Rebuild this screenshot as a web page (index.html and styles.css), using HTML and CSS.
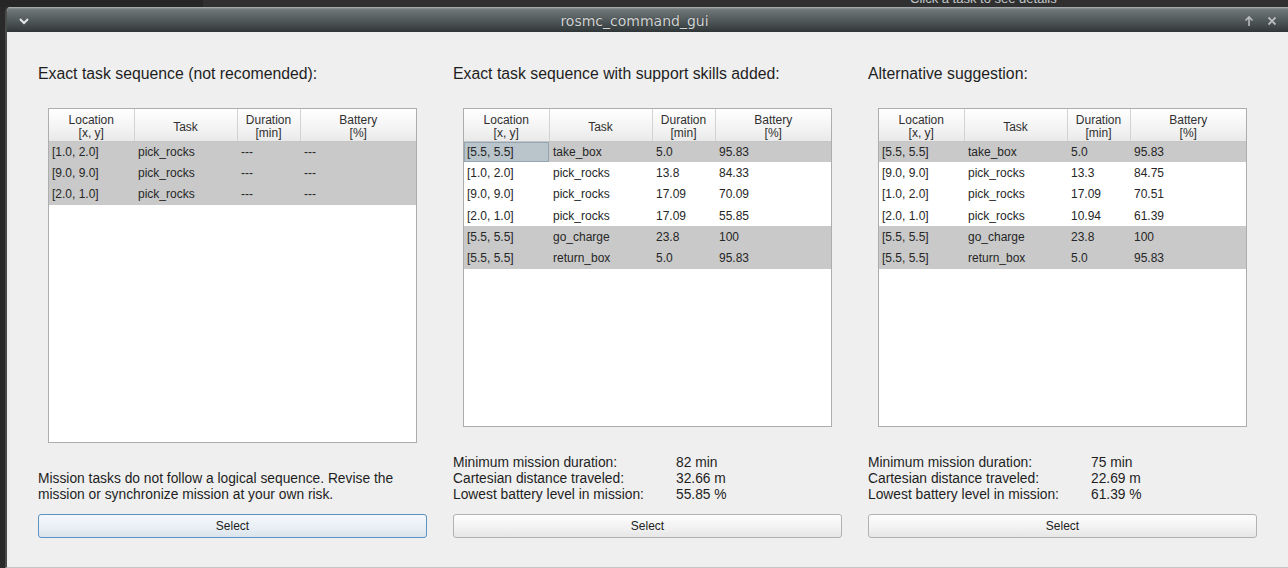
FILE: index.html
```html
<!DOCTYPE html>
<html lang="en">
<head>
<meta charset="utf-8">
<title>rosmc_command_gui</title>
<link rel="stylesheet" href="styles.css">
</head>
<body>
<div class="desk-strip"><span class="desk-hint">Click a task to see details</span></div>
<div class="window">
  <header class="titlebar">
    <svg class="tb-menu" width="12" height="8" viewBox="0 0 12 8"><polyline points="2,2 6,6 10,2" fill="none" stroke="#e6e6e6" stroke-width="2"/></svg>
    <span class="tb-title">rosmc_command_gui</span>
    <div class="tb-actions">
      <svg width="12" height="12" viewBox="0 0 12 12"><path d="M6 11V3M2.5 5.5L6 2l3.5 3.5" fill="none" stroke="#b9bcbd" stroke-width="1.6"/></svg>
      <svg width="12" height="12" viewBox="0 0 12 12"><path d="M2.5 2.5l7 7M9.5 2.5l-7 7" fill="none" stroke="#b9bcbd" stroke-width="1.8"/></svg>
    </div>
  </header>
  <main class="content">
    <section class="col">
      <h2 class="col-title">Exact task sequence (not recomended):</h2>
      <div class="grid-box">
        <table class="tasks">
          <colgroup><col class="c-loc"><col class="c-task"><col class="c-dur"><col></colgroup>
          <thead><tr><th>Location<br>[x, y]</th><th>Task</th><th>Duration<br>[min]</th><th>Battery<br>[%]</th></tr></thead>
          <tbody>
            <tr class="shade"><td>[1.0, 2.0]</td><td>pick_rocks</td><td>---</td><td>---</td></tr>
            <tr class="shade"><td>[9.0, 9.0]</td><td>pick_rocks</td><td>---</td><td>---</td></tr>
            <tr class="shade"><td>[2.0, 1.0]</td><td>pick_rocks</td><td>---</td><td>---</td></tr>
          </tbody>
        </table>
      </div>
      <p class="note">Mission tasks do not follow a logical sequence. Revise the<br>mission or synchronize mission at your own risk.</p>
      <button class="select is-default">Select</button>
    </section>

    <section class="col">
      <h2 class="col-title">Exact task sequence with support skills added:</h2>
      <div class="grid-box">
        <table class="tasks">
          <colgroup><col class="c-loc"><col class="c-task"><col class="c-dur"><col></colgroup>
          <thead><tr><th>Location<br>[x, y]</th><th>Task</th><th>Duration<br>[min]</th><th>Battery<br>[%]</th></tr></thead>
          <tbody>
            <tr class="shade"><td class="current">[5.5, 5.5]</td><td>take_box</td><td>5.0</td><td>95.83</td></tr>
            <tr><td>[1.0, 2.0]</td><td>pick_rocks</td><td>13.8</td><td>84.33</td></tr>
            <tr><td>[9.0, 9.0]</td><td>pick_rocks</td><td>17.09</td><td>70.09</td></tr>
            <tr><td>[2.0, 1.0]</td><td>pick_rocks</td><td>17.09</td><td>55.85</td></tr>
            <tr class="shade"><td>[5.5, 5.5]</td><td>go_charge</td><td>23.8</td><td>100</td></tr>
            <tr class="shade"><td>[5.5, 5.5]</td><td>return_box</td><td>5.0</td><td>95.83</td></tr>
          </tbody>
        </table>
      </div>
      <dl class="stats">
        <dt>Minimum mission duration:</dt><dd>82 min</dd>
        <dt>Cartesian distance traveled:</dt><dd>32.66 m</dd>
        <dt>Lowest battery level in mission:</dt><dd>55.85 %</dd>
      </dl>
      <button class="select">Select</button>
    </section>

    <section class="col">
      <h2 class="col-title">Alternative suggestion:</h2>
      <div class="grid-box">
        <table class="tasks">
          <colgroup><col class="c-loc"><col class="c-task"><col class="c-dur"><col></colgroup>
          <thead><tr><th>Location<br>[x, y]</th><th>Task</th><th>Duration<br>[min]</th><th>Battery<br>[%]</th></tr></thead>
          <tbody>
            <tr class="shade"><td>[5.5, 5.5]</td><td>take_box</td><td>5.0</td><td>95.83</td></tr>
            <tr><td>[9.0, 9.0]</td><td>pick_rocks</td><td>13.3</td><td>84.75</td></tr>
            <tr><td>[1.0, 2.0]</td><td>pick_rocks</td><td>17.09</td><td>70.51</td></tr>
            <tr><td>[2.0, 1.0]</td><td>pick_rocks</td><td>10.94</td><td>61.39</td></tr>
            <tr class="shade"><td>[5.5, 5.5]</td><td>go_charge</td><td>23.8</td><td>100</td></tr>
            <tr class="shade"><td>[5.5, 5.5]</td><td>return_box</td><td>5.0</td><td>95.83</td></tr>
          </tbody>
        </table>
      </div>
      <dl class="stats">
        <dt>Minimum mission duration:</dt><dd>75 min</dd>
        <dt>Cartesian distance traveled:</dt><dd>22.69 m</dd>
        <dt>Lowest battery level in mission:</dt><dd>61.39 %</dd>
      </dl>
      <button class="select">Select</button>
    </section>
  </main>
</div>
</body>
</html>
```

FILE: styles.css
```css
* { box-sizing: border-box; }

html, body {
  margin: 0;
  width: 1288px;
  height: 568px;
  overflow: hidden;
  background: #2a2a2a;
  font-family: "Liberation Sans", Arial, sans-serif;
}

/* desktop strip above the window; the hint of another window peeks in */
.desk-strip {
  height: 7px;
  display: flex;
  align-items: flex-end;
  overflow: hidden;
  background: linear-gradient(90deg, #262626 0 203px, #303030 203px);
}
.desk-hint {
  margin-left: 910px;
  margin-bottom: 2px;
  font-size: 13px;
  line-height: 12px;
  color: #c3c8cc;
  white-space: nowrap;
}

/* window frame */
.window {
  margin-left: 5px;
  height: 561px;
  display: flex;
  flex-direction: column;
  border-left: 2px solid #4a4a4a;
  border-radius: 5px 0 0 0;
  background: #efefef;
  border-bottom: 1px solid #c4c4c4;
  overflow: hidden;
}

.titlebar {
  height: 25px;
  flex: none;
  display: flex;
  align-items: center;
  padding: 0 10px 0 11px;
  background: linear-gradient(#8a9193 0, #6e7577 2px, #535a5c 12px, #363d3f 22px, #2b3133 25px);
  border-top: 1px solid #a4aaac;
}
.tb-menu { flex: none; margin-top: 2px; }
.tb-title {
  flex: 1;
  text-align: center;
  font-family: "DejaVu Sans", sans-serif;
  font-size: 14px;
  color: #d2d4d5;
  text-shadow: 0 0 1px #1d2224;
  margin-left: -4px;
  margin-top: 1px;
}
.tb-actions { display: flex; gap: 11px; align-items: center; margin-top: 2px; }

/* three result panels */
.content {
  flex: 1;
  display: grid;
  grid-template-columns: repeat(3, 1fr);
  gap: 26px;
  padding: 32px 31px 29px 31px;
}

.col {
  display: flex;
  flex-direction: column;
  min-height: 0;
}

.col-title {
  margin: 0 0 25px;
  font-size: 15.8px;
  font-weight: normal;
  line-height: 19px;
  color: #1e1e1e;
}

.grid-box {
  flex: 1;
  margin: 0 10px 28px;
  background: #fff;
  border: 1px solid #adadad;
  overflow: hidden;
}

.tasks {
  width: 100%;
  border-collapse: collapse;
  table-layout: fixed;
  font-size: 12px;
  color: #262626;
}
.c-loc { width: 85px; }
.c-task { width: 103px; }
.c-dur { width: 63px; }

.tasks th {
  height: 32px;
  padding: 5px 2px 0;
  font-weight: normal;
  line-height: 13px;
  color: #303030;
  background: linear-gradient(#ffffff, #f3f3f3 60%, #e9e9e9);
  border-right: 1px solid #d3d3d3;
  border-bottom: 1px solid #c6c6c6;
  text-align: center;
}
.tasks th:last-child { border-right: none; }

.tasks td {
  height: 21.33px;
  padding: 0 3px 0 3px;
  white-space: nowrap;
  line-height: 14px;
}
.tasks td + td { padding-left: 4px; }

.tasks tr.shade td { background: #c9c9c9; }
.tasks td.current {
  background: #b9c4cb !important;
  box-shadow: inset 0 0 0 1px #93a6b4;
}

.note {
  margin: 0 0 11px;
  font-size: 13.8px;
  line-height: 16px;
  color: #1e1e1e;
}

.stats {
  margin: 0 0 11px;
  display: grid;
  grid-template-columns: 223px 1fr;
  font-size: 13.8px;
  line-height: 16px;
  color: #1e1e1e;
}
.stats dt, .stats dd { margin: 0; }

.select {
  height: 24px;
  width: 100%;
  flex: none;
  font-family: inherit;
  font-size: 12px;
  color: #222;
  border: 1px solid #b2b2b2;
  border-radius: 3px;
  background: linear-gradient(#fdfdfd, #f1f1f1 60%, #e6e6e6);
  padding: 0;
}
.select.is-default {
  border-color: #5a94c4;
  background: linear-gradient(#f5f8fb, #e8eef4 60%, #dbe4ec);
}
```
